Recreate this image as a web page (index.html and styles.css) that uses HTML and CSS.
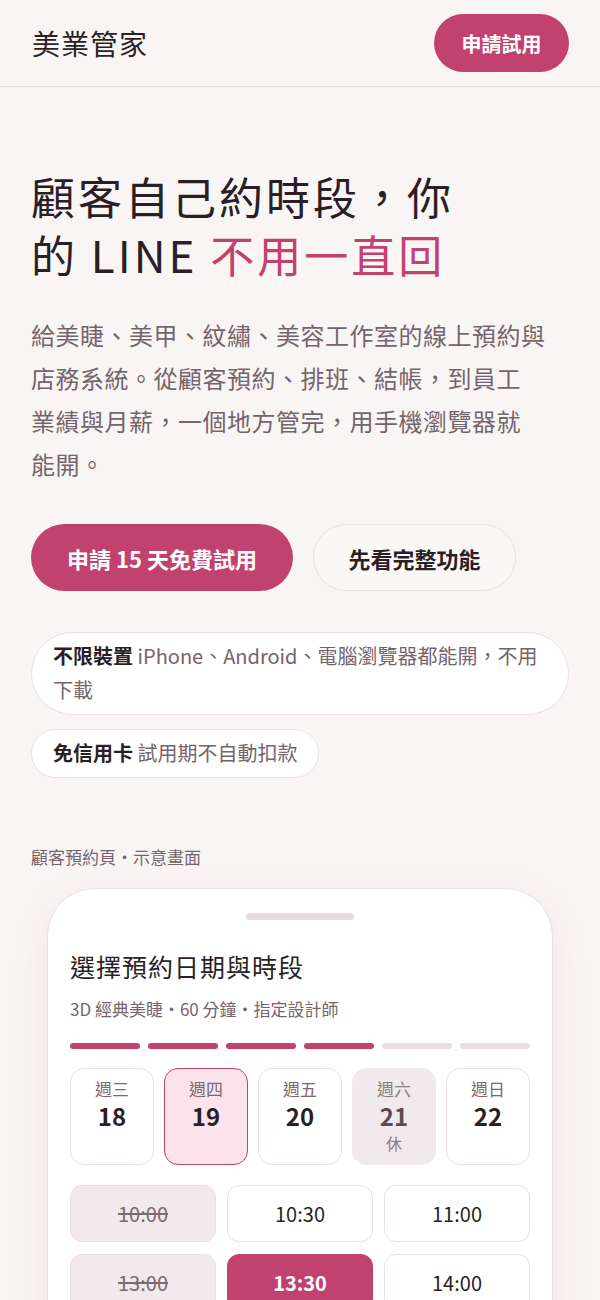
FILE: index.html
```html
<!DOCTYPE html>
<html lang="zh-Hant">
<head>
    <meta charset="UTF-8">
    <meta name="viewport" content="width=device-width, initial-scale=1.0">
    <title>美業管家</title>
    <link rel="stylesheet" href="styles.css">
</head>
<body>
<header class="topbar">
    <div class="logo">美業管家</div>
    <a class="btn btn-small" href="#">申請試用</a>
</header>

<main class="hero">
    <h1 class="headline">顧客自己約時段，你<br>的 LINE <span class="accent">不用一直回</span></h1>
    <p class="lead">給美睫、美甲、紋繡、美容工作室的線上預約與店務系統。從顧客預約、排班、結帳，到員工業績與月薪，一個地方管完，用手機瀏覽器就能開。</p>

    <div class="actions">
        <a class="btn btn-primary" href="#">申請 15 天免費試用</a>
        <a class="btn btn-ghost" href="#">先看完整功能</a>
    </div>

    <div class="chips">
        <div class="chip"><b>不限裝置</b> iPhone、Android、電腦瀏覽器都能開，不用下載</div>
        <div class="chip"><b>免信用卡</b> 試用期不自動扣款</div>
    </div>

    <div class="caption">顧客預約頁・示意畫面</div>

    <div class="phone">
        <div class="notch"></div>
        <h2 class="phone-title">選擇預約日期與時段</h2>
        <div class="phone-sub">3D 經典美睫・60 分鐘・指定設計師</div>

        <div class="steps">
            <span class="step done"></span>
            <span class="step done"></span>
            <span class="step done"></span>
            <span class="step done"></span>
            <span class="step"></span>
            <span class="step"></span>
        </div>

        <div class="days">
            <div class="day"><span class="wd">週三</span><span class="num">18</span></div>
            <div class="day selected"><span class="wd">週四</span><span class="num">19</span></div>
            <div class="day"><span class="wd">週五</span><span class="num">20</span></div>
            <div class="day off"><span class="wd">週六</span><span class="num">21</span><span class="rest">休</span></div>
            <div class="day"><span class="wd">週日</span><span class="num">22</span></div>
        </div>

        <div class="slots">
            <div class="slot taken">10:00</div>
            <div class="slot">10:30</div>
            <div class="slot">11:00</div>
            <div class="slot taken">13:00</div>
            <div class="slot picked">13:30</div>
            <div class="slot">14:00</div>
        </div>
    </div>
</main>
</body>
</html>
```

FILE: styles.css
```css
body {
    font-family: "Noto Sans CJK TC", "Noto Sans", sans-serif;
    margin: 0;
    padding: 0;
    background-color: #faf5f5;
    color: #2a1f24;
}
.topbar {
    display: flex;
    align-items: center;
    justify-content: space-between;
    height: 86px;
    padding: 0 31px 0 32px;
    border-bottom: 1px solid #e9e1e3;
}
.logo {
    font-size: 28px;
    font-weight: 400;
    letter-spacing: 1px;
}
.btn {
    display: inline-flex;
    align-items: center;
    justify-content: center;
    border-radius: 999px;
    font-weight: bold;
    text-decoration: none;
    box-sizing: border-box;
}
.btn-small {
    height: 58px;
    width: 135px;
    font-size: 20px;
    background-color: #c2426f;
    color: #fff;
}
.hero {
    padding: 80px 31px 0;
}
.headline {
    margin: 0;
    font-size: 44px;
    font-weight: 400;
    line-height: 58px;
    letter-spacing: 3px;
}
.accent {
    color: #c2426f;
}
.lead {
    margin: 30px 0 0;
    font-size: 24px;
    line-height: 43px;
    letter-spacing: 0.5px;
    color: #74656c;
    text-wrap: pretty;
}
.actions {
    display: flex;
    gap: 20px;
    margin-top: 39px;
}
.btn-primary {
    height: 67px;
    width: 262px;
    font-size: 22px;
    background-color: #c2426f;
    color: #fff;
}
.btn-ghost {
    height: 67px;
    width: 203px;
    font-size: 22px;
    color: #2a1f24;
    border: 1px solid #ebdfe2;
    background-color: #fbf7f7;
}
.chips {
    display: flex;
    flex-direction: column;
    align-items: flex-start;
    gap: 14px;
    margin-top: 41px;
}
.chip {
    background-color: #fff;
    border: 1px solid #ebdfe2;
    border-radius: 42px;
    padding: 6px 21px 7px;
    font-size: 20px;
    line-height: 34px;
    color: #74656c;
    text-wrap: pretty;
}
.chip b {
    color: #2a1f24;
}
.caption {
    margin-top: 67px;
    font-size: 17px;
    line-height: 24px;
    color: #74656c;
}
.phone {
    margin: 19px 16px 0;
    background-color: #fff;
    border: 1px solid #ebdfe2;
    border-radius: 48px 48px 0 0;
    padding: 24px 22px 40px;
    box-shadow: 0 10px 40px rgba(120, 60, 80, 0.08);
}
.notch {
    width: 108px;
    height: 7px;
    border-radius: 4px;
    background-color: #e8dadf;
    margin: 0 auto;
}
.phone-title {
    margin: 29px 0 0;
    font-size: 25px;
    font-weight: 400;
    line-height: 34px;
    letter-spacing: 1px;
}
.phone-sub {
    margin-top: 14px;
    font-size: 17px;
    line-height: 24px;
    color: #74656c;
}
.steps {
    display: flex;
    gap: 8px;
    margin-top: 22px;
}
.step {
    flex: 1;
    height: 6px;
    border-radius: 3px;
    background-color: #ecdfe3;
}
.step.done {
    background-color: #c2426f;
}
.days {
    display: grid;
    grid-template-columns: repeat(5, 1fr);
    gap: 10px;
    margin-top: 19px;
}
.day {
    display: flex;
    flex-direction: column;
    align-items: center;
    height: 97px;
    box-sizing: border-box;
    padding-top: 7px;
    border: 1px solid #ebdfe2;
    border-radius: 14px;
    background-color: #fff;
}
.day .wd {
    font-size: 17px;
    line-height: 25px;
    color: #7a6b72;
}
.day .num {
    font-size: 24px;
    font-weight: bold;
    line-height: 30px;
}
.day .rest {
    font-size: 16px;
    line-height: 24px;
    color: #8c7d84;
}
.day.selected {
    background-color: #fae3eb;
    border-color: #b9486f;
}
.day.off {
    background-color: #f1eaec;
    border-color: #f1eaec;
}
.day.off .wd {
    color: #8c7d84;
}
.day.off .num {
    color: #5a4b52;
}
.slots {
    display: grid;
    grid-template-columns: repeat(3, 1fr);
    gap: 12px 11px;
    margin-top: 20px;
}
.slot {
    height: 57px;
    box-sizing: border-box;
    display: flex;
    align-items: center;
    justify-content: center;
    border: 1px solid #ebdfe2;
    border-radius: 12px;
    background-color: #fff;
    font-size: 20px;
}
.slot.taken {
    background-color: #f1e9eb;
    color: #7a6b72;
    text-decoration: line-through;
}
.slot.picked {
    background-color: #c2426f;
    border-color: #c2426f;
    color: #fff;
    font-weight: bold;
}
```
